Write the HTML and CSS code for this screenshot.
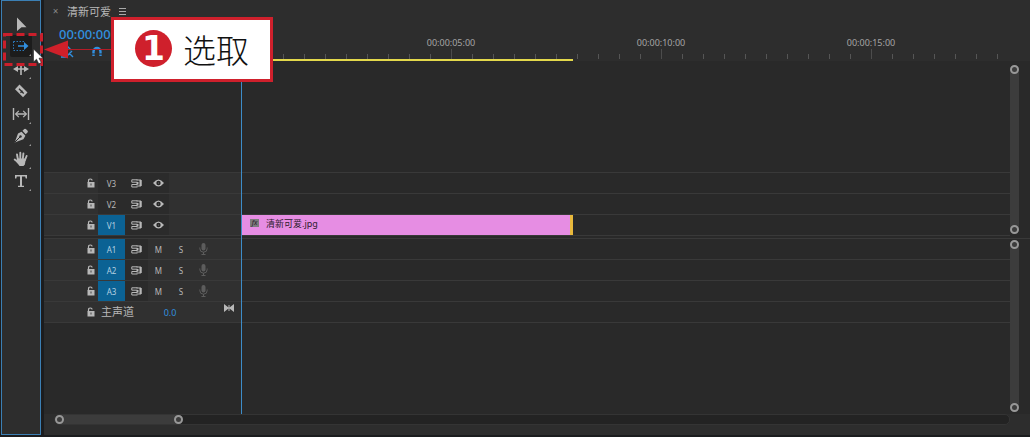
FILE: index.html
```
<!DOCTYPE html>
<html lang="zh-CN">
<head>
  <meta charset="UTF-8">
  <meta name="viewport" content="width=device-width, initial-scale=1.0">
  <title>清新可爱</title>
  <link rel="stylesheet" href="styles.css">
</head>
<body>
  <svg class="symbols" xmlns="http://www.w3.org/2000/svg">
    <symbol id="lock" viewBox="0 0 8 10">
      <path d="M1.500 5V3q0-2 1.800-2t1.800 1.500" fill="none" stroke="currentColor" stroke-width="1.200"/>
      <path d="M.5 4H7.500V9.500H.5z" fill="currentColor"/>
      <path d="M4 5.500v2" stroke="#444"/>
    </symbol>
    <symbol id="sync" viewBox="0 0 11 9">
      <path d="M6.500 .8H.8V3.200H6.500M6.500 5.500H.8V8H6.500" fill="none" stroke="currentColor"/>
      <path d="M5.500 1H10v6H5.500" fill="none" stroke="currentColor"/>
      <path d="M8.500 1h2v6h-2zM5.500 3h2v2.500h-2z" fill="currentColor"/>
    </symbol>
    <symbol id="eye" viewBox="0 0 11 8">
      <path d="M0 4Q5.500-3 11 4Q5.500 11 0 4z" fill="currentColor"/>
      <circle cx="5.500" cy="4" r="2.200" fill="#262626"/>
      <circle cx="5.500" cy="4" r=".6" fill="#777"/>
    </symbol>
    <symbol id="mic" viewBox="0 0 9 12">
      <rect x="2.500" y="0" width="4" height="7.500" rx="2" fill="currentColor"/>
      <path d="M.8 4.500v1a3.700 3.700 0 0 0 7.400 0v-1M4.500 9v2.500M2.500 11.500h4" fill="none" stroke="currentColor"/>
    </symbol>
  </svg>

  <div class="app">
    <aside class="tools">
      <button class="tool" aria-label="选择工具">
        <svg viewBox="0 0 22 22"><path d="M7 4.500L16.500 14.200H11.500L7 18z"/></svg>
      </button>
      <button class="tool active more" aria-label="向前选择轨道工具">
        <svg viewBox="0 0 22 22">
          <path d="M3.500 6.500h11M3.500 15.500h11M3.500 6.500v9" class="line" stroke-width=".8" stroke-dasharray="1.500 1.500"/>
          <path d="M8 10.200h6V7L18.500 11 14 15v-3.200H8z"/>
        </svg>
      </button>
      <button class="tool more" aria-label="波纹编辑工具">
        <svg viewBox="0 0 22 22">
          <path d="M11 5v12M5 11h12" class="line" stroke-width="1.600"/>
          <path d="M3 11l5-3v6zM19 11l-5-3v6z"/>
        </svg>
      </button>
      <button class="tool" aria-label="剃刀工具">
        <svg viewBox="0 0 22 22">
          <path d="M9.500 4.500l8 8-4.500 4.800-8-8z"/>
          <path d="M9 8.800l4.700 4.700M12.500 10.800l-2 2" stroke="#2b2b2b" stroke-width="1.300"/>
        </svg>
      </button>
      <button class="tool more" aria-label="外滑工具">
        <svg viewBox="0 0 22 22">
          <path d="M3.500 5v12M18.500 5v12M6 11h10" class="line" stroke-width="1.400"/>
          <path d="M8.800 7.800L5.600 11l3.200 3.200M13.200 7.800l3.200 3.200-3.200 3.200" class="line" stroke-width="1.200"/>
        </svg>
      </button>
      <button class="tool more" aria-label="钢笔工具">
        <svg viewBox="0 0 22 22">
          <path d="M12.500 5.800l1.800-1.800q1-.7 1.800.2l1.500 1.600q.7.900-.1 1.700l-1.800 1.700zM11.500 6.800l3.900 3.900-2 3.500-8.700 3.300L8 8.500z"/>
          <path d="M5 17l5-5" stroke="#2b2b2b"/>
          <circle cx="10.500" cy="11.500" r="1.200" fill="#2b2b2b"/>
        </svg>
      </button>
      <button class="tool more" aria-label="手形工具">
        <svg viewBox="0 0 22 22">
          <path d="M8 12L7 6.500M10.300 11V4.800M12.800 11l.6-5.500M15 12l1.600-4M8.500 14.500l-3.800-3" fill="none" stroke="currentColor" stroke-width="1.900" stroke-linecap="round"/>
          <path d="M7.200 10.500h8.800l-1.200 6-1.300 1.500H9.600L6 13.500z"/>
        </svg>
      </button>
      <button class="tool more" aria-label="文字工具">
        <svg viewBox="0 0 22 22">
          <path d="M5 5h12v3.500h-1.300L15.200 6.500H12v9.200h2V17H8v-1.300h2V6.500H6.800L6.300 8.500H5z"/>
        </svg>
      </button>
    </aside>

    <main class="timeline">
      <div class="tab">
        <button class="close" aria-label="关闭">×</button>
        <span>清新可爱</span>
        <button class="menu" aria-label="菜单"><i></i><i></i><i></i></button>
      </div>

      <div class="top">
        <div class="info">
          <div class="timecode">00:00:00:00</div>
          <div class="toggles">
            <svg width="16" height="12" viewBox="0 0 16 12"><path d="M4 1h5l3 3M2 5h6M5 3v7M8 10l5-5M10 7l4 4M2 11h7" class="line" stroke-width="1.400"/></svg>
            <svg width="12" height="12" viewBox="0 0 12 12"><path d="M2.500 10V5.500a3.500 3.500 0 0 1 7 0V10" class="line" stroke-width="2.400"/><path d="M1 8h3M8 8h3" stroke="#2b2b2b"/></svg>
          </div>
        </div>
        <div class="ruler">
          <span>00:00:05:00</span>
          <span>00:00:10:00</span>
          <span>00:00:15:00</span>
          <div class="work-area" style="width: 332px"></div>
        </div>
      </div>

      <div class="tracks">
        <section class="section video">
          <div class="heads">
            <div class="head">
              <svg width="8" height="10"><use href="#lock"/></svg>
              <span class="name">V3</span>
              <span class="cell"><svg width="11" height="9"><use href="#sync"/></svg></span>
              <span class="cell"><svg width="11" height="8"><use href="#eye"/></svg></span>
            </div>
            <div class="head">
              <svg width="8" height="10"><use href="#lock"/></svg>
              <span class="name">V2</span>
              <span class="cell"><svg width="11" height="9"><use href="#sync"/></svg></span>
              <span class="cell"><svg width="11" height="8"><use href="#eye"/></svg></span>
            </div>
            <div class="head">
              <svg width="8" height="10"><use href="#lock"/></svg>
              <span class="name on">V1</span>
              <span class="cell"><svg width="11" height="9"><use href="#sync"/></svg></span>
              <span class="cell"><svg width="11" height="8"><use href="#eye"/></svg></span>
            </div>
          </div>
          <div class="lanes">
            <div class="lane"></div>
            <div class="lane"></div>
            <div class="lane">
              <div class="clip" style="width: 332px"><span class="fx">fx</span>清新可爱.jpg</div>
            </div>
          </div>
          <div class="vscroll"><i></i><i></i></div>
        </section>

        <div class="divider"></div>

        <section class="section audio">
          <div class="heads">
            <div class="head">
              <svg width="8" height="10"><use href="#lock"/></svg>
              <span class="name on">A1</span>
              <span class="cell"><svg width="11" height="9"><use href="#sync"/></svg></span>
              <button>M</button>
              <button>S</button>
              <svg class="mic" width="9" height="12"><use href="#mic"/></svg>
            </div>
            <div class="head">
              <svg width="8" height="10"><use href="#lock"/></svg>
              <span class="name on">A2</span>
              <span class="cell"><svg width="11" height="9"><use href="#sync"/></svg></span>
              <button>M</button>
              <button>S</button>
              <svg class="mic" width="9" height="12"><use href="#mic"/></svg>
            </div>
            <div class="head">
              <svg width="8" height="10"><use href="#lock"/></svg>
              <span class="name on">A3</span>
              <span class="cell"><svg width="11" height="9"><use href="#sync"/></svg></span>
              <button>M</button>
              <button>S</button>
              <svg class="mic" width="9" height="12"><use href="#mic"/></svg>
            </div>
            <div class="head master">
              <svg width="8" height="10"><use href="#lock"/></svg>
              <span class="title">主声道</span>
              <span class="level">0.0</span>
              <svg class="fit" width="10" height="8" viewBox="0 0 10 8"><path d="M0 0l4.500 3.500V1h1v2.500L10 0v8L5.500 4.500V7h-1V4.500L0 8z" fill="currentColor"/></svg>
            </div>
          </div>
          <div class="lanes">
            <div class="lane"></div>
            <div class="lane"></div>
            <div class="lane"></div>
            <div class="lane"></div>
          </div>
          <div class="vscroll"><i></i><i></i></div>
        </section>
        <div class="playhead"></div>
      </div>

      <div class="hscroll">
        <div class="thumb"><i></i><i></i></div>
      </div>
    </main>
  </div>

  <svg class="marker" width="112" height="72" viewBox="0 0 112 72">
    <rect x="4.500" y="34.500" width="37" height="30" fill="none" stroke="#cb1f2b" stroke-width="3" stroke-dasharray="8 4"/>
    <path d="M66 49.500h46" stroke="#b51c27" stroke-width="1.200"/>
    <path d="M44 49.500l24-9v18z" fill="#cf202a"/>
    <path d="M33.500 49v13l3-2.800 2.300 4.600 2.500-1.200-2.300-4.400h4z" fill="#fff" stroke="#222" stroke-width=".6"/>
  </svg>
  <div class="callout">
    <span class="step">1</span>
    <span>选取</span>
  </div>
</body>
</html>
```
FILE: styles.css
```
:root {
  --bg: #1b1c1e;
  --panel: #2d2d2d;
  --track: #292929;
  --head: #303030;
  --line: #393939;
  --icon: #b8b8b8;
  --blue: #318fdf;
  --edge: #3b7fb4;
  --red: #cf202c;
}

* {
  margin: 0;
  padding: 0;
  box-sizing: border-box;
}

body {
  background: var(--bg);
  color: var(--icon);
  font-family: 'Noto Sans', 'Noto Sans CJK SC', sans-serif;
  font-size: 9px;
}

button {
  border: none;
  background: none;
  color: inherit;
  font: inherit;
}

svg {
  display: block;
}

.symbols {
  display: none;
}

.line {
  fill: none;
  stroke: currentColor;
}

.app {
  display: flex;
  gap: 3px;
  min-height: 100vh;
  padding: 0 0 2px 1px;
}

/* Tool palette */
.tools {
  display: flex;
  flex-direction: column;
  align-items: center;
  width: 40px;
  padding-top: 12px;
  border: 1px solid var(--edge);
  background: var(--panel);
}

.tool {
  position: relative;
  width: 22px;
  height: 22px;
  flex: none;
}

.tool:nth-child(even) {
  margin-bottom: 1px;
}

.tool svg {
  width: 22px;
  height: 22px;
  fill: currentColor;
}

.tool .line {
  fill: none;
}

.tool.active {
  background: #1c1c1c;
  border-radius: 2px;
  color: var(--blue);
}

.more::after {
  content: "";
  position: absolute;
  right: 1px;
  bottom: 1px;
  border: 1px solid #999;
  border-top-color: transparent;
  border-left-color: transparent;
}

/* Timeline panel */
.timeline {
  flex: 1;
  display: flex;
  flex-direction: column;
  min-width: 0;
  background: var(--panel);
}

.tab {
  display: flex;
  align-items: center;
  height: 22px;
  padding-left: 8px;
  gap: 8px;
  font-size: 11px;
}

.close {
  width: 7px;
  color: #888;
  font-size: 10px;
}

.menu {
  display: flex;
  flex-direction: column;
  gap: 2px;
  width: 7px;
}

.menu i {
  height: 1px;
  background: #aaa;
}

.top {
  display: flex;
  height: 39px;
}

.info {
  width: 197px;
  padding-left: 15px;
  color: var(--blue);
}

.timecode {
  font-size: 13px;
  font-weight: 500;
  line-height: 24px;
}

.toggles {
  display: flex;
  gap: 16px;
}

.ruler {
  position: relative;
  flex: 1;
  display: flex;
  padding: 14px 0 0 105px;
  overflow: hidden;
  line-height: 14px;
  color: #a5a5a5;
  background:
    repeating-linear-gradient(90deg, #4c4c4c 0 1px, transparent 1px 210px) 0 27px / 100% 10px no-repeat,
    repeating-linear-gradient(90deg, #555 0 1px, transparent 1px 21px) 0 32px / 766px 5px no-repeat;
}

.ruler span {
  flex: 0 0 210px;
  text-align: center;
}

.work-area {
  position: absolute;
  left: 0;
  bottom: 0;
  height: 2px;
  background: #e3d84b;
}

.tracks {
  position: relative;
  flex: 1;
  display: flex;
  flex-direction: column;
  background: var(--track);
}

.section {
  flex: 1;
  display: flex;
}

.heads {
  width: 197px;
}

.lanes {
  flex: 1;
}

.video .heads,
.video .lanes {
  display: flex;
  flex-direction: column;
  justify-content: flex-end;
}

.head {
  display: grid;
  grid-template-columns: 15px 27px 23px 21px 24px 20px;
  align-items: center;
  justify-items: center;
  height: 21px;
  padding-left: 39px;
  background: var(--head);
  border-bottom: 1px solid var(--line);
}

.lane {
  height: 21px;
  border-bottom: 1px solid var(--line);
}

.video .head:first-child,
.video .lane:first-child {
  height: 22px;
  border-top: 1px solid var(--line);
}

.name,
.cell {
  display: grid;
  place-items: center;
  width: 100%;
  height: 20px;
  background: #2b2b2b;
}

.name,
.head button {
  font-size: 8px;
}

.name.on {
  background: #0b6294;
  color: #b4d0e0;
}

.mic {
  color: #5c5c5c;
}

.head.master {
  grid-template-columns: 15px 60px 24px 1fr;
}

.title {
  justify-self: start;
  padding-left: 3px;
  font-size: 11px;
  line-height: 16px;
}

.level {
  color: var(--blue);
}

.fit {
  justify-self: end;
  align-self: start;
  margin: 2px 7px 0 0;
}

.clip {
  display: flex;
  align-items: center;
  height: 20px;
  padding: 0 0 4px 9px;
  gap: 7px;
  background: #e68de3;
  border-right: 3px solid #e8b83c;
  color: #2b1b2b;
}

.fx {
  width: 9px;
  height: 8px;
  background: #7c7c7c;
  font-size: 7px;
  font-style: italic;
  line-height: 7px;
  text-align: center;
}

.divider {
  height: 3px;
  border-bottom: 1px solid var(--line);
}

.playhead {
  position: absolute;
  top: 0;
  bottom: 0;
  left: 197px;
  width: 1px;
  background: #3d8cc8;
}

/* Scroll bars */
.vscroll {
  display: flex;
  flex-direction: column;
  justify-content: space-between;
  width: 9px;
  margin: 4px 11px 2px 0;
  border-radius: 5px;
  background: #3c3c3c;
}

.audio .vscroll {
  margin: 1px 11px 2px 0;
}

.vscroll i,
.hscroll i {
  width: 9px;
  height: 9px;
  border: 2px solid #989898;
  border-radius: 50%;
}

.hscroll {
  height: 11px;
  margin: 0 20px 10px 10px;
  border: 1px solid #343434;
  border-radius: 5px;
  background: #232323;
}

.thumb {
  display: flex;
  justify-content: space-between;
  width: 128px;
  border-radius: 5px;
  background: #3c3c3c;
}

/* Step annotation */
.marker {
  position: absolute;
  top: 0;
  left: 0;
}

.callout {
  position: absolute;
  top: 17px;
  left: 111px;
  display: flex;
  align-items: center;
  gap: 11px;
  width: 162px;
  height: 65px;
  padding: 0 0 2px 21px;
  border: 3px solid var(--red);
  background: #fff;
  color: #111;
  font-family: 'Noto Sans CJK SC', sans-serif;
  font-size: 33px;
  font-weight: 300;
  line-height: 44px;
}

.step {
  width: 37px;
  height: 37px;
  border-radius: 50%;
  background: var(--red);
  color: #fff;
  font-family: 'DejaVu Sans', sans-serif;
  font-weight: 700;
  line-height: 37px;
  text-align: center;
}
```
